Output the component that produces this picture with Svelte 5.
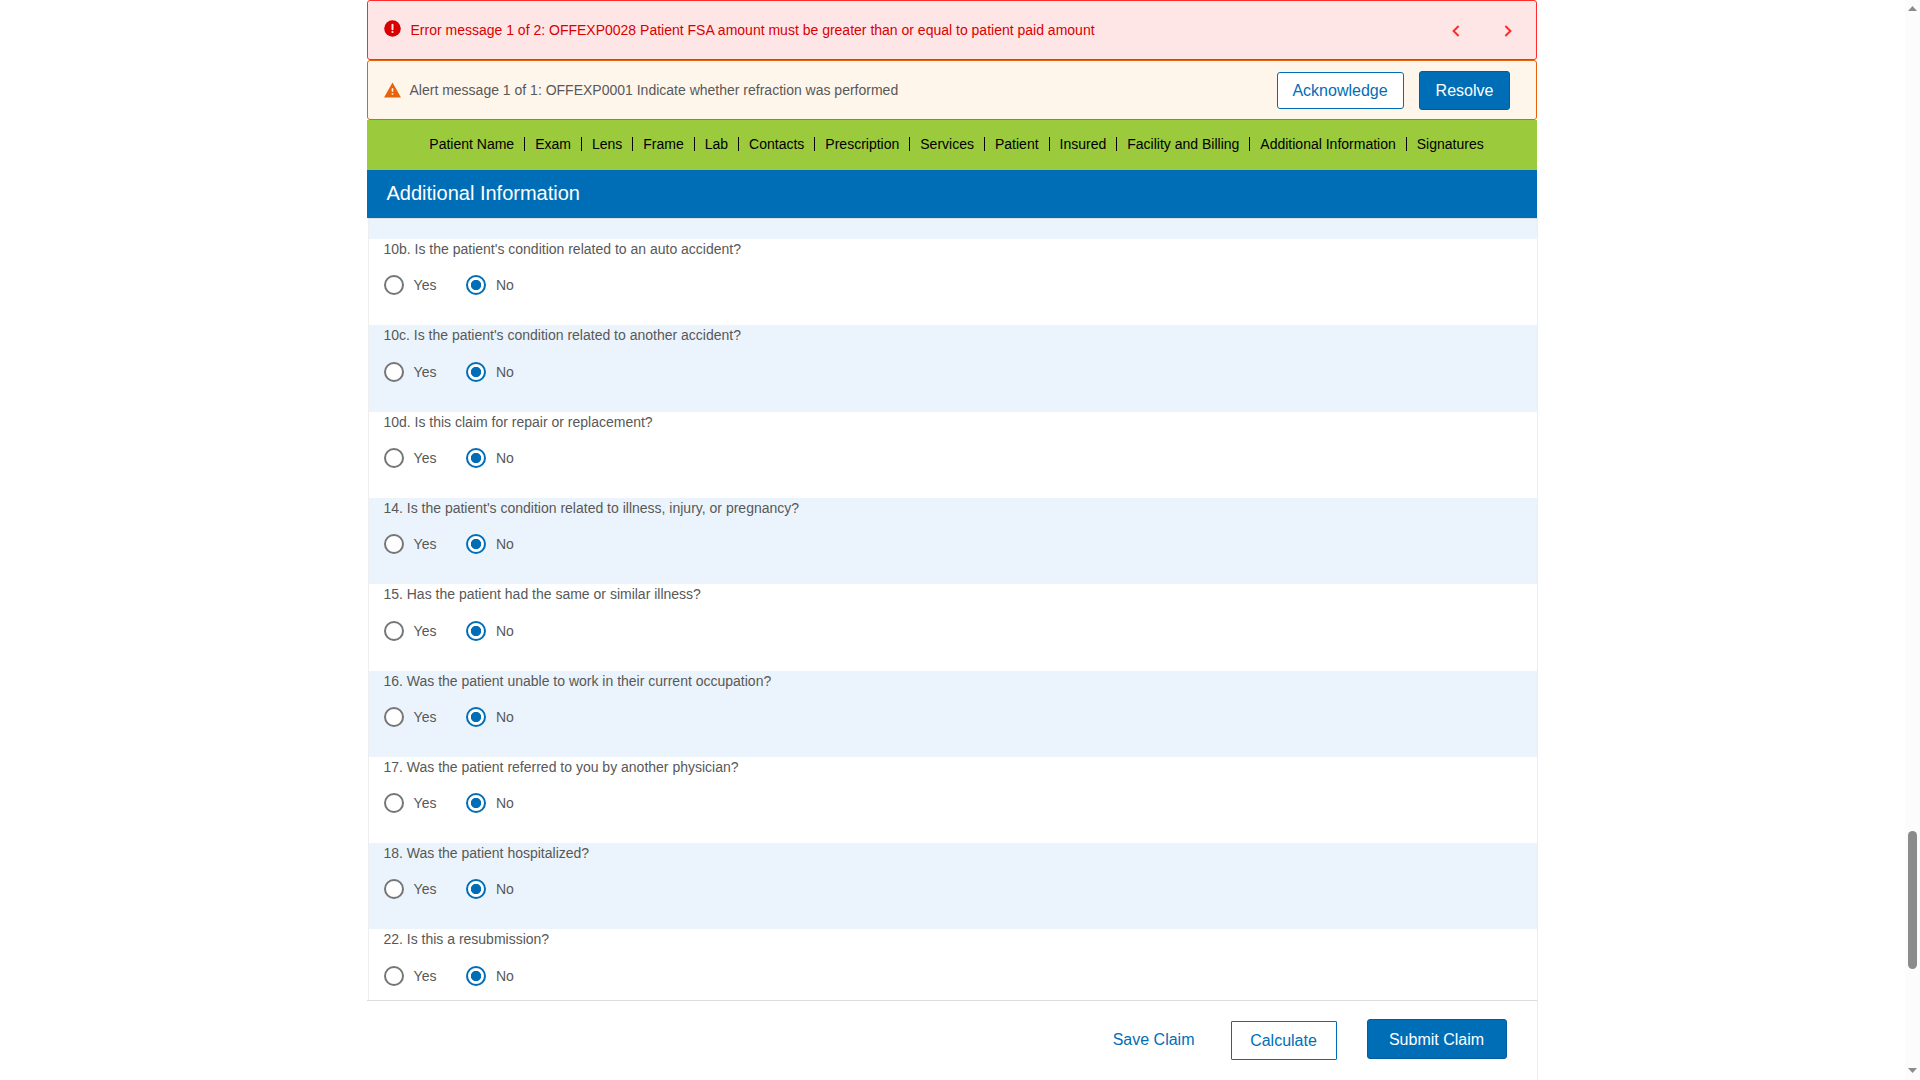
<script>
  const sections = [
    'Patient Name', 'Exam', 'Lens', 'Frame', 'Lab', 'Contacts', 'Prescription',
    'Services', 'Patient', 'Insured', 'Facility and Billing',
    'Additional Information', 'Signatures'
  ];

  let questions = $state([
    { id: '10b', text: "Is the patient's condition related to an auto accident?", answer: 'No' },
    { id: '10c', text: "Is the patient's condition related to another accident?", answer: 'No' },
    { id: '10d', text: 'Is this claim for repair or replacement?', answer: 'No' },
    { id: '14', text: "Is the patient's condition related to illness, injury, or pregnancy?", answer: 'No' },
    { id: '15', text: 'Has the patient had the same or similar illness?', answer: 'No' },
    { id: '16', text: 'Was the patient unable to work in their current occupation?', answer: 'No' },
    { id: '17', text: 'Was the patient referred to you by another physician?', answer: 'No' },
    { id: '18', text: 'Was the patient hospitalized?', answer: 'No' },
    { id: '22', text: 'Is this a resubmission?', answer: 'No' }
  ]);
</script>

<div class="page">
  <main class="claim">
    <div class="message error">
      <svg class="icon" width="17" height="17" viewBox="0 0 17 17">
        <circle cx="8.5" cy="8.5" r="8.3" fill="#d80000" />
        <path d="M8.5 4.800v4.400" stroke="#ffe6e6" stroke-width="2" stroke-linecap="round" />
        <circle cx="8.5" cy="12" r="1.1" fill="#ffe6e6" />
      </svg>
      <span class="text">Error message 1 of 2: OFFEXP0028 Patient FSA amount must be greater than or equal to patient paid amount</span>
      <button class="arrow" aria-label="Previous message">
        <svg width="8" height="12" viewBox="0 0 8 12"><path d="M6.6 1L1.6 6l5 5" /></svg>
      </button>
      <button class="arrow" aria-label="Next message">
        <svg width="8" height="12" viewBox="0 0 8 12"><path d="M1.4 1l5 5-5 5" /></svg>
      </button>
    </div>

    <div class="message alert">
      <svg class="icon" width="17" height="16" viewBox="0 0 17 16">
        <path d="M8.5 .4L17 15.600H0z" fill="#e8620c" />
        <path d="M7.700 6.200h1.600v3.600h-1.600zM7.700 11.200h1.600v1.600h-1.600z" fill="#fff6eb" />
      </svg>
      <span class="text">Alert message 1 of 1: OFFEXP0001 Indicate whether refraction was performed</span>
      <button class="btn outline acknowledge">Acknowledge</button>
      <button class="btn solid resolve">Resolve</button>
    </div>

    <nav>
      {#each sections as section}
        <span class="link">{section}</span>
      {/each}
    </nav>

    <h1>Additional Information</h1>

    <section class="questions">
      <div class="lead"></div>
      {#each questions as question}
        <div class="question">
          <p>{question.id}. {question.text}</p>
          <div class="options">
            {#each ['Yes', 'No'] as option}
              <label>
                <input type="radio" name={question.id} value={option} bind:group={question.answer} />
                {option}
              </label>
            {/each}
          </div>
        </div>
      {/each}
    </section>

    <footer>
      <button class="btn link-btn">Save Claim</button>
      <button class="btn outline calculate">Calculate</button>
      <button class="btn solid submit">Submit Claim</button>
    </footer>
  </main>

  <div class="scrollbar">
    <svg width="9" height="5" viewBox="0 0 9 5"><path d="M4.5 0L9 5H0z" fill="#8b8b8b" /></svg>
    <div class="thumb"></div>
    <svg width="9" height="5" viewBox="0 0 9 5"><path d="M0 0h9L4.5 5z" fill="#8b8b8b" /></svg>
  </div>
</div>

<style>
  :global(body) {
    margin: 0;
    overflow: hidden;
    background: #fff;
  }
  .page {
    display: flex;
    justify-content: space-between;
    box-sizing: border-box;
    width: 1920px;
    height: 1080px;
    padding-left: 367px;
    overflow: hidden;
    font: 14px/20px "Liberation Sans", Arial, sans-serif;
    color: #585858;
  }
  .claim {
    display: flex;
    flex-direction: column;
    width: 1171px;
    height: 1080px;
  }
  button {
    font-family: inherit;
    cursor: pointer;
  }
  .message {
    display: flex;
    align-items: center;
    box-sizing: border-box;
    flex: none;
    width: 1170px;
    height: 60px;
    padding-left: 16px;
    border: 1px solid;
    border-radius: 3px;
  }
  .message .text {
    flex: 1;
  }
  .icon {
    flex: none;
  }
  .error {
    padding-right: 24px;
    border-color: #ff2b2b;
    background: #ffe6e6;
    color: #d80000;
  }
  .error .icon {
    margin: 0 9.5px 3px 0;
  }
  .alert {
    padding-right: 26px;
    border-color: #e8620c;
    background: #fff6eb;
  }
  .alert .icon {
    margin-right: 8.5px;
  }
  .arrow {
    display: flex;
    margin-top: 1.4px;
    padding: 0;
    border: 0;
    background: none;
  }
  .arrow + .arrow {
    margin-left: 44px;
  }
  .arrow path {
    fill: none;
    stroke: #ff2b2b;
    stroke-width: 2;
  }
  .btn {
    box-sizing: border-box;
    flex: none;
    padding: 0;
    border: 1px solid #006eb7;
    border-radius: 3px;
    font-size: 16px;
    line-height: 20px;
  }
  .outline {
    background: #fff;
    color: #006eb7;
  }
  .solid {
    border-color: #005c9a;
    background: #006eb7;
    color: #fff;
  }
  .acknowledge {
    width: 127px;
    height: 37px;
    margin-right: 15px;
    padding: 1px 1px 0 0;
  }
  .resolve {
    width: 91px;
    height: 39px;
    padding-top: 2px;
  }
  nav {
    display: flex;
    flex: none;
    align-items: center;
    justify-content: center;
    box-sizing: border-box;
    width: 1170px;
    height: 50px;
    padding: 0 0 2px 9px;
    background: #9bcb3c;
    color: #000;
  }
  .link {
    line-height: 14px;
    padding: 0 10px;
    border-right: 1px solid #000;
    white-space: nowrap;
  }
  .link:last-child {
    border-right: 0;
  }
  h1 {
    flex: none;
    box-sizing: border-box;
    width: 1170px;
    height: 48px;
    margin: 0;
    padding-left: 19.5px;
    background: #006eb7;
    color: #fff;
    font-size: 20px;
    font-weight: 400;
    line-height: 46px;
  }
  .questions {
    flex: none;
    box-sizing: border-box;
    height: 782px;
    margin-left: 1px;
    border: 1px solid #eee;
    border-top-color: #dcdfe2;
    border-bottom: 0;
    overflow: hidden;
  }
  .lead {
    height: 20.06px;
    background: #ebf4fc;
  }
  .question {
    box-sizing: border-box;
    height: 86.3px;
    padding-left: 15px;
  }
  .question:nth-child(odd) {
    background: #ebf4fc;
  }
  p {
    margin: 0 0 0 -0.6px;
  }
  .options {
    display: flex;
    padding-top: 16.3px;
  }
  label {
    display: flex;
    align-items: center;
    gap: 9.6px;
    width: 82.4px;
    height: 20px;
  }
  input {
    appearance: none;
    box-sizing: border-box;
    flex: none;
    width: 20px;
    height: 20px;
    margin: 0;
    border: 2px solid #767676;
    border-radius: 50%;
    background: #fff;
  }
  input:checked {
    border-color: #006eb7;
    background: radial-gradient(circle, #006eb7 4.8px, #fff 5.5px);
  }
  footer {
    display: flex;
    flex: 1;
    align-items: flex-start;
    justify-content: flex-end;
    box-sizing: border-box;
    padding: 18px 30px 0 0;
    border-top: 1px solid #dcdcdc;
    border-right: 1px solid #eee;
  }
  .link-btn {
    height: 40px;
    margin-right: 35.5px;
    padding-top: 2px;
    border-color: transparent;
    background: none;
    color: #006eb7;
  }
  .calculate {
    width: 106px;
    height: 39px;
    margin: 2px 30px 0 0;
    padding-right: 1px;
    border-radius: 1px;
  }
  .submit {
    width: 140px;
    height: 40px;
    padding: 2px 1px 0 0;
  }
  .scrollbar {
    display: flex;
    flex-direction: column;
    align-items: center;
    box-sizing: border-box;
    width: 15px;
    height: 1080px;
    padding: 6px 0 7px;
    background: #fcfcfc;
  }
  .thumb {
    width: 9px;
    height: 138px;
    margin: 820px 0 99px;
    border-radius: 5px;
    background: #8b8b8b;
  }
</style>
